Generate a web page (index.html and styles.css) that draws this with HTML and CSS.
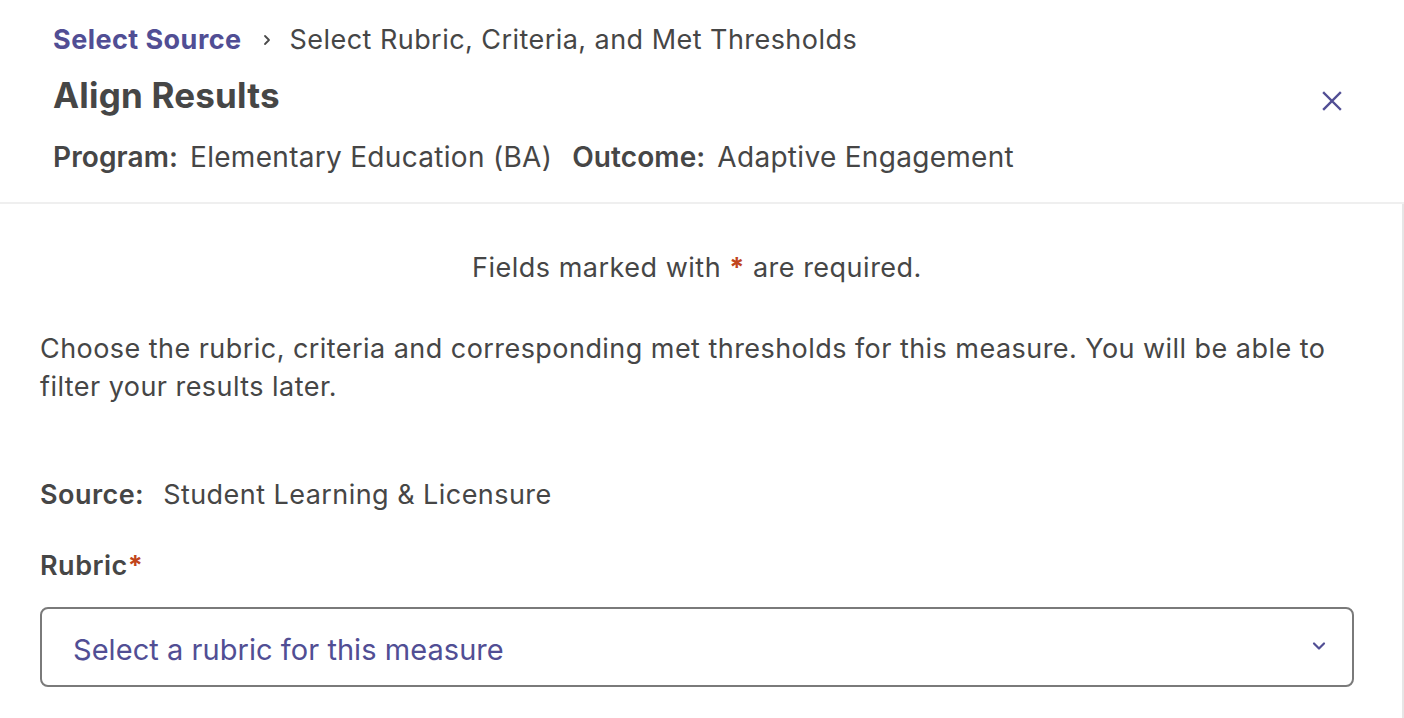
FILE: index.html
```html
<!DOCTYPE html>
<html lang="en">
<head>
<meta charset="utf-8">
<title>Align Results</title>
<link rel="stylesheet" href="styles.css">
</head>
<body>
<div class="modal">
  <header class="header">
    <div class="header-main">
      <nav class="breadcrumb">
        <a class="crumb-link" href="#">Select Source</a>
        <svg class="crumb-sep" width="14" height="14" viewBox="0 0 14 14"><path d="M5 3 L9 7 L5 11" fill="none" stroke="currentColor" stroke-width="1.8" stroke-linecap="round" stroke-linejoin="round"/></svg>
        <span class="crumb-current">Select Rubric, Criteria, and Met Thresholds</span>
      </nav>
      <h1 class="title">Align Results</h1>
      <div class="meta">
        <span class="meta-label">Program:</span>
        <span class="meta-value">Elementary Education (BA)</span>
        <span class="meta-label">Outcome:</span>
        <span class="meta-value">Adaptive Engagement</span>
      </div>
    </div>
    <button class="close" aria-label="Close">
      <svg width="22" height="22" viewBox="0 0 22 22"><path d="M3 3 L19 19 M19 3 L3 19" fill="none" stroke="currentColor" stroke-width="2.4" stroke-linecap="square"/></svg>
    </button>
  </header>
  <main class="content">
    <p class="required-note">Fields marked with <span class="req">*</span> are required.</p>
    <p class="intro">Choose the rubric, criteria and corresponding met thresholds for this measure. You will be able to filter your results later.</p>
    <div class="source">
      <span class="source-label">Source:</span>
      <span class="source-value">Student Learning &amp; Licensure</span>
    </div>
    <div class="field">
      <label class="field-label">Rubric<span class="req">*</span></label>
      <div class="select">
        <span class="select-placeholder">Select a rubric for this measure</span>
        <svg class="select-chevron" width="16" height="12" viewBox="0 0 16 12"><path d="M3 3.5 L8 8.5 L13 3.5" fill="none" stroke="currentColor" stroke-width="2.2" stroke-linecap="round" stroke-linejoin="round"/></svg>
      </div>
    </div>
  </main>
</div>
</body>
</html>
```

FILE: styles.css
```css
* { box-sizing: border-box; }
html, body { margin: 0; padding: 0; background: #fff; }
body {
  font-family: Inter, "Noto Sans", "Liberation Sans", sans-serif;
  color: #464646;
  width: 1404px;
  height: 718px;
  overflow: hidden;
}
.modal { display: flex; flex-direction: column; height: 718px; }
.header {
  display: flex;
  justify-content: space-between;
  align-items: flex-start;
  padding: 20px 61px 0 53px;
  height: 204px;
  border-bottom: 2px solid #efefef;
}
.breadcrumb {
  display: flex;
  align-items: center;
  font-size: 27px;
  line-height: 40px;
  letter-spacing: 0.45px;
}
.crumb-link {
  color: #514e94;
  font-weight: 700;
  text-decoration: none;
}
.crumb-sep { color: #4a4a4a; margin: 0 16px 0 18px; }
.crumb-current { color: #464646; }
.title {
  margin: 13px 0 0;
  font-size: 35px;
  line-height: 44px;
  font-weight: 700;
  color: #464646;
  letter-spacing: 0.2px;
}
.meta {
  margin-top: 21px;
  font-size: 28px;
  line-height: 38px;
  letter-spacing: 0.3px;
  display: flex;
  gap: 12px;
}
.meta-label { font-weight: 600; letter-spacing: 0.1px; }
.meta-value { margin-right: 8px; }
.close {
  margin-top: 70px;
  background: none;
  border: none;
  padding: 0;
  color: #514e94;
  width: 22px;
  height: 22px;
  cursor: pointer;
}
.close svg { display: block; }
.content {
  flex: 1;
  padding: 44px 48px 0 40px;
  border-right: 2px solid #e6e6e6;
}
.required-note {
  margin: 0;
  text-align: center;
  font-size: 27px;
  line-height: 40px;
  letter-spacing: 0.5px;
}
.req { color: #c1451c; font-weight: 700; }
.intro {
  margin: 42px 0 0;
  font-size: 27px;
  line-height: 38px;
  letter-spacing: 0.45px;
}
.source {
  margin-top: 70px;
  font-size: 27px;
  line-height: 38px;
  letter-spacing: 0.45px;
  display: flex;
  gap: 19px;
}
.source-label { font-weight: 600; }
.field { margin-top: 33px; }
.field-label {
  display: block;
  font-size: 27px;
  line-height: 38px;
  font-weight: 600;
  letter-spacing: 0.5px;
}
.select {
  margin-top: 22px;
  height: 80px;
  border: 2px solid #7a7a7a;
  border-radius: 8px;
  display: flex;
  align-items: center;
  justify-content: space-between;
  padding: 4px 25px 0 31px;
}
.select-placeholder { color: #514e94; font-size: 29px; letter-spacing: 0.05px; }
.select-chevron { color: #514e94; margin-top: -6px; }
```
